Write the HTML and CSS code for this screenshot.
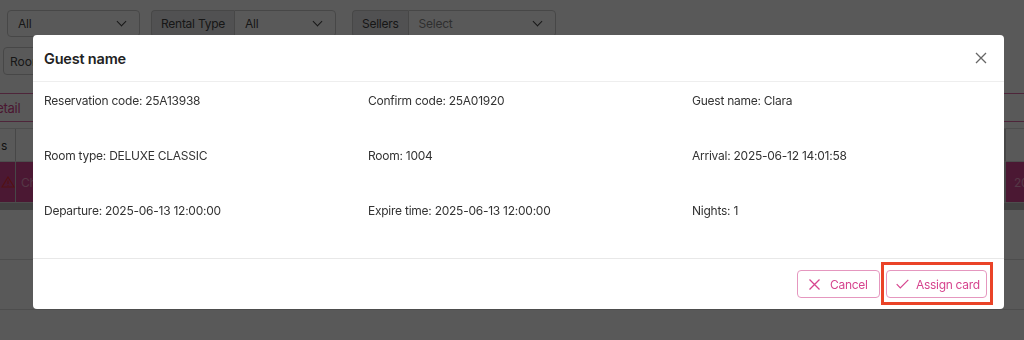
FILE: index.html
```html
<!DOCTYPE html>
<html>
<head>
    <title>Guest name</title>
    <link rel="stylesheet" href="styles.css">
</head>
<body>
    <div class="page">
        <div class="filters">
            <div class="select wide">All <span class="caret"></span></div>
            <div class="group">
                <span class="addon">Rental Type</span>
                <div class="select">All <span class="caret"></span></div>
            </div>
            <div class="group">
                <span class="addon">Sellers</span>
                <div class="select sellers placeholder">Select <span class="caret"></span></div>
            </div>
        </div>
        <div class="toolbar">
            <button class="tool-btn">Room</button>
        </div>
        <div class="tabs">
            <span class="tab">Detail</span>
        </div>
        <div class="table">
            <div class="row head">
                <div class="cell first">s</div>
                <div class="cell grow"></div>
                <div class="cell last"></div>
            </div>
            <div class="row alert">
                <div class="cell first">
                    <svg width="14" height="12" viewBox="0 0 14 12"><path d="M7 1L13 11H1Z M7 4.5V8 M7 9.2V9.9" stroke="#e8313a" stroke-width="1.2" fill="none"/></svg>
                </div>
                <div class="cell grow">Ch</div>
                <div class="cell last">20</div>
            </div>
            <div class="scrollbar"></div>
            <div class="row empty"></div>
            <div class="row empty"></div>
        </div>
    </div>

    <div class="backdrop"></div>

    <div class="modal">
        <div class="modal-header">
            <h2>Guest name</h2>
            <button class="close">
                <svg width="12" height="12" viewBox="0 0 12 12"><path d="M1 1L11 11M11 1L1 11" stroke="#666" stroke-width="1.3" fill="none"/></svg>
            </button>
        </div>
        <div class="modal-body">
            <div class="info">Reservation code: 25A13938</div>
            <div class="info">Confirm code: 25A01920</div>
            <div class="info">Guest name: Clara</div>
            <div class="info">Room type: DELUXE CLASSIC</div>
            <div class="info">Room: 1004</div>
            <div class="info">Arrival: 2025-06-12 14:01:58</div>
            <div class="info">Departure: 2025-06-13 12:00:00</div>
            <div class="info">Expire time: 2025-06-13 12:00:00</div>
            <div class="info">Nights: 1</div>
        </div>
        <div class="modal-footer">
            <button class="btn cancel">
                <svg width="11" height="11" viewBox="0 0 11 11"><path d="M0.5 0.5L10.5 10.5M10.5 0.5L0.5 10.5" stroke="#d6448e" stroke-width="1.3" fill="none"/></svg>
                <span>Cancel</span>
            </button>
            <button class="btn assign">
                <svg width="13" height="10" viewBox="0 0 13 10"><path d="M0.7 5.2L4.3 8.8L12.3 0.8" stroke="#d6448e" stroke-width="1.2" fill="none"/></svg>
                <span>Assign card</span>
            </button>
            <div class="highlight"></div>
        </div>
    </div>
</body>
</html>
```

FILE: styles.css
```css
* {
    margin: 0;
    padding: 0;
    box-sizing: border-box;
}

body {
    background-color: #fff;
    color: #333;
    font-family: 'Inter', 'Liberation Sans', sans-serif;
    font-size: 12px;
    letter-spacing: -0.25px;
    width: 1024px;
    height: 340px;
    overflow: hidden;
}

/* page behind the modal */
.page {
    padding-top: 10px;
}

.filters {
    display: flex;
    padding-left: 7px;
    height: 27px;
}

.select {
    display: flex;
    align-items: center;
    justify-content: space-between;
    border: 1px solid #ccc;
    border-radius: 4px;
    padding: 0 10px;
    width: 102px;
    color: #444;
}

.select.wide {
    width: 133px;
    margin-right: 11px;
}

.select.sellers {
    width: 148px;
}

.placeholder {
    color: #888;
}

.caret {
    width: 7px;
    height: 7px;
    border-right: 1.5px solid #444;
    border-bottom: 1.5px solid #444;
    transform: rotate(45deg);
    margin-top: -4px;
    margin-right: 4px;
}

.group {
    display: flex;
    margin-right: 16px;
}

.group .select {
    border-radius: 0 4px 4px 0;
}

.addon {
    display: flex;
    align-items: center;
    background-color: #e8e8ea;
    border: 1px solid #ccc;
    border-right: none;
    border-radius: 4px 0 0 4px;
    padding: 0 9px;
    color: #444;
}

.toolbar {
    padding: 10px 0 0 3px;
}

.tool-btn {
    font-family: inherit;
    font-size: 12px;
    color: #444;
    background-color: #fff;
    border: 1px solid #ccc;
    border-radius: 4px;
    height: 28px;
    width: 60px;
    text-align: left;
    padding: 0 6px;
}

.tabs {
    margin-top: 18px;
    border-top: 1px solid #e06aa6;
    border-bottom: 1px solid #e06aa6;
    height: 29px;
    display: flex;
    align-items: center;
}

.tab {
    color: #d6448e;
    font-size: 13px;
    margin-left: -13px;
}

.table {
    margin-top: 6px;
}

.row {
    display: flex;
    border-bottom: 1px solid #ddd;
}

.row.head {
    height: 34px;
    border-top: 1px solid #ddd;
}

.row.alert {
    height: 41px;
    background-color: #d84592;
    color: #f0a0c8;
}

.cell {
    display: flex;
    align-items: center;
    border-right: 1px solid #ccc;
}

.cell.first {
    width: 16px;
    padding-left: 1px;
}

.cell.grow {
    flex: 1;
    padding-left: 5px;
}

.cell.last {
    width: 19px;
    border-right: none;
    border-left: 1px solid #ccc;
    padding-left: 8px;
}

.scrollbar {
    height: 7px;
    background-color: #bdbdbd;
}

.row.empty {
    height: 50px;
}

.backdrop {
    position: fixed;
    inset: 0;
    background-color: rgba(0, 0, 0, 0.65);
}

/* modal */
.modal {
    position: fixed;
    left: 33px;
    top: 35px;
    width: 971px;
    height: 274px;
    background-color: #fff;
    border-radius: 4px;
    display: flex;
    flex-direction: column;
}

.modal-header {
    height: 47px;
    display: flex;
    align-items: center;
    justify-content: space-between;
    padding: 0 17px 0 11px;
    border-bottom: 1px solid #eee;
}

.modal-header h2 {
    font-size: 14.5px;
    font-weight: 600;
    letter-spacing: -0.2px;
    color: #222;
}

.close {
    background: none;
    border: none;
    display: flex;
    cursor: pointer;
}

.modal-body {
    display: grid;
    grid-template-columns: repeat(3, 324px);
    grid-auto-rows: 18px;
    row-gap: 37px;
    padding: 10px 11px 0 11px;
    height: 177px;
    border-bottom: 1px solid #e8e8e8;
}

.info {
    line-height: 18px;
    color: #333;
}

.modal-footer {
    flex: 1;
    display: flex;
    justify-content: flex-end;
    align-items: center;
    gap: 6px;
    padding-right: 17px;
    position: relative;
}

.btn {
    display: flex;
    align-items: center;
    height: 28px;
    font-family: inherit;
    font-size: 12px;
    letter-spacing: -0.3px;
    white-space: nowrap;
    color: #d6448e;
    background-color: #fff;
    border: 1px solid #e597bf;
    border-radius: 4px;
    cursor: pointer;
}

.btn.cancel {
    width: 83px;
    padding-left: 11px;
    gap: 10px;
}

.btn.assign {
    width: 101px;
    padding-left: 9px;
    gap: 7px;
}

.highlight {
    position: absolute;
    right: 11px;
    top: 3px;
    width: 112px;
    height: 43px;
    border: 3px solid #ea4327;
}
```
